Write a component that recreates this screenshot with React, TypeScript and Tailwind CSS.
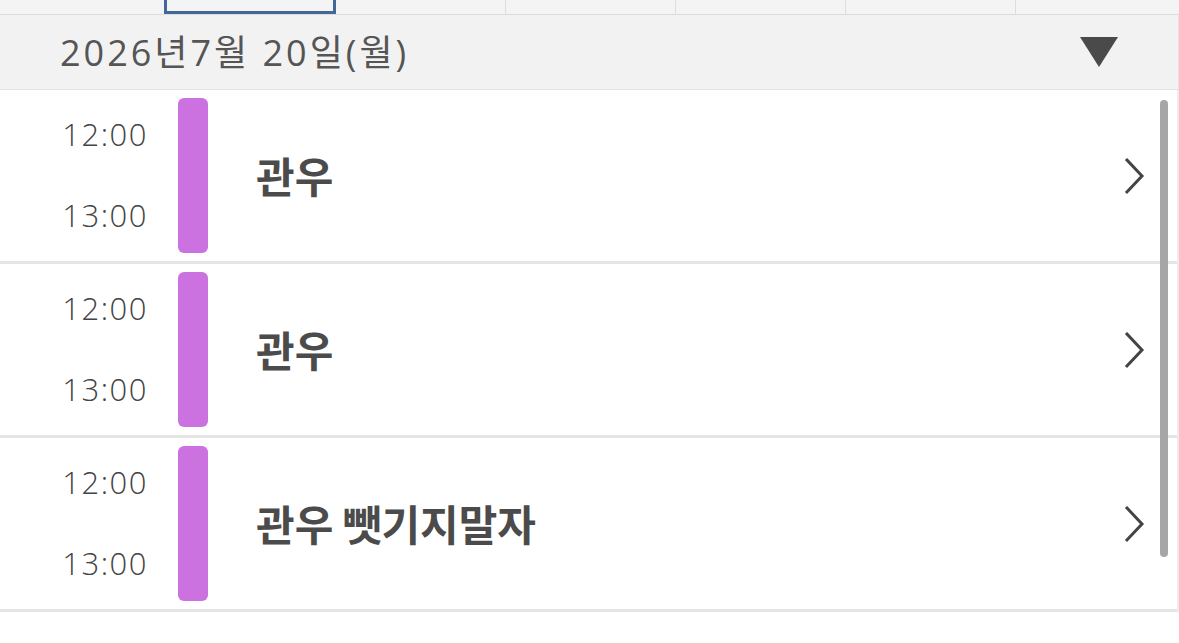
import React from 'react';

type Slot = { start: string; end: string; title: string };

const slots: Slot[] = [
    { start: '12:00', end: '13:00', title: '관우' },
    { start: '12:00', end: '13:00', title: '관우' },
    { start: '12:00', end: '13:00', title: '관우 뺏기지말자' },
];

const font = { fontFamily: '"Open Sans", "Noto Sans CJK KR", sans-serif' };
const krFont = { fontFamily: '"Noto Sans CJK KR", "Noto Sans", sans-serif' };

const Chevron = () => (
    <svg width="24" height="38" viewBox="0 0 24 38" fill="none">
        <path d="M4 3 L19 19 L4 35" stroke="#444" strokeWidth="3" strokeLinecap="square" />
    </svg>
);

const SlotRow = ({ slot }: { slot: Slot }) => (
    <div className="flex h-[174px] items-stretch border-b-[3px] border-[#e5e5e5] bg-white">
        <div className="flex w-[148px] flex-col items-end justify-center gap-[49px] pb-[2px] text-[31px] font-light leading-[32px] tracking-[1.5px] text-[#444]">
            <span>{slot.start}</span>
            <span>{slot.end}</span>
        </div>
        <div className="ml-[30px] my-[8px] w-[30px] rounded-[6px] bg-[#cc72e0]" />
        <div className="flex flex-1 items-center pl-[48px] pb-[2px] text-[42px] font-bold text-[#4b4b4b]" style={krFont}>
            {slot.title}
        </div>
        <div className="flex items-center pr-[30px]">
            <Chevron />
        </div>
    </div>
);

export default function App() {
    return (
        <div className="relative h-[643px] w-[1179px] overflow-hidden bg-white" style={font}>
            {/* week strip, mostly scrolled off */}
            <div className="grid h-[15px] grid-cols-[164px_172px_170px_170px_170px_170px_1fr] border-b border-[#dcdcdc] bg-[#f4f4f4]">
                <div />
                <div className="border-x-[3px] border-b-[3px] border-[#44679a]" />
                <div className="border-r border-[#dedede]" />
                <div className="border-r border-[#dedede]" />
                <div className="border-r border-[#dedede]" />
                <div className="border-r border-[#dedede]" />
                <div />
            </div>

            <div className="flex h-[75px] items-center justify-between border-b border-r border-[#e2e2e2] bg-[#f2f2f2] pl-[60px] pr-[60px]">
                <span className="pt-[1px] text-[36px] leading-none tracking-[3px] text-[#555]">2026년7월 20일(월)</span>
                <svg width="38" height="30" viewBox="0 0 38 30">
                    <polygon points="0,0 38,0 19,30" fill="#4a4a4a" />
                </svg>
            </div>

            <div className="border-r-2 border-[#ececec]">
                {slots.map((s, i) => (
                    <SlotRow key={i} slot={s} />
                ))}
            </div>

            {/* scrollbar thumb */}
            <div className="absolute left-[1160px] top-[100px] h-[457px] w-[8px] rounded-full bg-[#a6a6a6]" />
        </div>
    );
}
